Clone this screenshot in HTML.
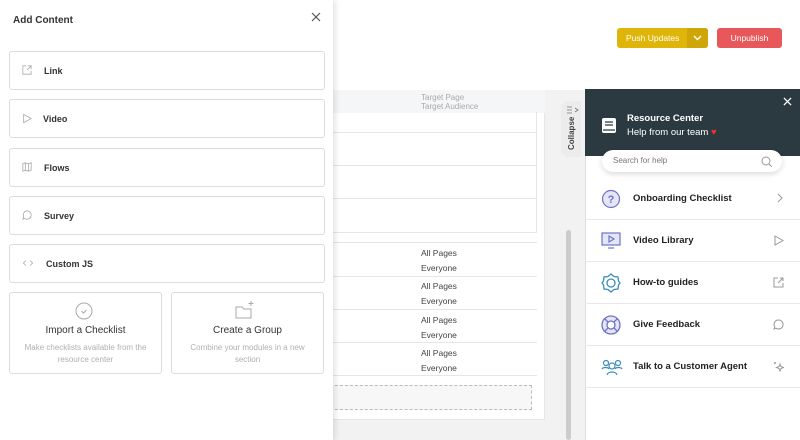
<!DOCTYPE html>
<html><head><style>
*{box-sizing:border-box;margin:0;padding:0}
body{width:800px;height:440px;overflow:hidden;position:relative;background:#fff;font-family:"Liberation Sans",sans-serif;color:#333}
.abs{position:absolute}
.card{position:absolute;left:9px;width:316px;height:39px;border:1px solid #dcdcdc;border-radius:3px;background:#fff;font-size:9px;font-weight:bold;color:#333}
.card span{position:absolute;top:14px}
.card svg{position:absolute;left:12px;top:13px}
.big{position:absolute;top:292px;width:153px;height:82px;border:1px solid #dcdcdc;border-radius:3px;text-align:center}
.big b{display:block;font-weight:normal;font-size:10px;color:#333;margin-top:32px}
.big p{font-size:8px;color:#b0b0b0;line-height:12px;margin-top:6px}
.tx{position:absolute;left:421px;font-size:8.5px;color:#444}
.row{position:absolute;left:333px;width:204px;border-bottom:1px solid #e6e6e6}
.rc{position:absolute;left:585px;width:215px;height:42px;border-bottom:1px solid #e8e8e8;font-size:9.5px;font-weight:bold;color:#222}
.rc span{position:absolute;left:48px;top:15px}
.rc svg.i{position:absolute;left:16px;top:11px}
.rc svg.r{position:absolute;right:16px;top:15px}
</style></head><body>
<div class="abs" style="left:333px;top:90px;width:252px;height:350px;background:#f2f2f2"></div>
<div class="abs" style="left:333px;top:90px;width:212px;height:330px;background:#fff;border-right:1px solid #e6e6e6;border-bottom:1px solid #e6e6e6"></div>
<div class="abs" style="left:333px;top:90px;width:212px;height:23px;background:#f5f6f8"></div>
<div class="abs" style="left:421px;top:93px;font-size:8px;color:#aaa;line-height:9px">Target Page<br>Target Audience</div>
<div class="abs" style="left:333px;top:112px;width:204px;height:121px;border:1px solid #e6e6e6;border-left:none;border-top:none"></div>
<div class="row" style="top:112px;height:21px"></div>
<div class="row" style="top:133px;height:33px"></div>
<div class="row" style="top:166px;height:33px"></div>
<div class="abs" style="left:333px;top:242px;width:204px;border-top:1px solid #e6e6e6"></div>
<div class="row" style="top:243px;height:34px"></div>
<div class="row" style="top:277px;height:33px"></div>
<div class="row" style="top:310px;height:33px"></div>
<div class="row" style="top:343px;height:33px"></div>
<div class="tx" style="top:248px">All Pages</div><div class="tx" style="top:263px">Everyone</div>
<div class="tx" style="top:281px">All Pages</div><div class="tx" style="top:296px">Everyone</div>
<div class="tx" style="top:315px">All Pages</div><div class="tx" style="top:330px">Everyone</div>
<div class="tx" style="top:348px">All Pages</div><div class="tx" style="top:363px">Everyone</div>
<div class="abs" style="left:320px;top:385px;width:212px;height:25px;border:1px dashed #bbb;background:#f7f7f7"></div>
<div class="abs" style="left:566px;top:230px;width:5px;height:210px;background:#ccc;border-radius:3px"></div>
<div class="abs" style="left:561px;top:101px;width:20px;height:56px;background:#ececec;border-radius:8px 0 0 8px"></div>
<div class="abs" style="left:567px;top:150px;font-size:8px;font-weight:bold;color:#444;transform:rotate(-90deg);transform-origin:0 0;width:40px;white-space:nowrap">Collapse</div>
<svg class="abs" style="left:566px;top:106px" width="13" height="8" viewBox="0 0 13 8" fill="none" stroke="#777" stroke-width="0.8"><path d="M1 1h5M1 4h5M1 7h5M9 2l3 2-3 2"/></svg>
<div class="abs" style="left:617px;top:28px;width:91px;height:20px;background:#e0b50a;border-radius:3px;color:#fff;font-size:8.5px;line-height:20px;padding-left:9px">Push Updates</div>
<div class="abs" style="left:687px;top:28px;width:21px;height:20px;background:#cfa608;border-radius:0 3px 3px 0"></div>
<svg class="abs" style="left:693px;top:35px" width="9" height="6" viewBox="0 0 9 6" fill="none" stroke="#fff" stroke-width="1.4"><path d="M1 1l3.5 3.5L8 1"/></svg>
<div class="abs" style="left:717px;top:28px;width:65px;height:20px;background:#e8585a;border-radius:3px;color:#fff;font-size:8.5px;line-height:20px;text-align:center">Unpublish</div>
<div class="abs" style="left:0;top:0;width:333px;height:440px;background:#fff;box-shadow:2px 0 6px rgba(0,0,0,.12)"></div>
<div class="abs" style="left:13px;top:15px;font-size:10px;font-weight:bold;color:#333">Add Content</div>
<svg class="abs" style="left:311px;top:12px" width="10" height="10" viewBox="0 0 10 10" stroke="#555" stroke-width="1.2"><path d="M1 1l8 8M9 1L1 9"/></svg>
<div class="card" style="top:51px"><svg width="10" height="10" viewBox="0 0 12 12" fill="none" stroke="#aaa" stroke-width="1"><path d="M5 1H1v10h10V7M7 1h4v4M11 1L6 6"/></svg><span style="left:34px">Link</span></div>
<div class="card" style="top:99px"><svg width="10" height="11" viewBox="0 0 12 12" fill="none" stroke="#aaa"><path d="M2 1l9 5-9 5z"/></svg><span style="left:33px">Video</span></div>
<div class="card" style="top:148px"><svg width="10" height="10" viewBox="0 0 12 12" fill="none" stroke="#aaa"><path d="M1 2l3-1 4 1 3-1v9l-3 1-4-1-3 1zM4 1v9M8 2v9"/></svg><span style="left:34px">Flows</span></div>
<div class="card" style="top:196px"><svg width="10" height="10" viewBox="0 0 12 12" fill="none" stroke="#aaa"><path d="M6 1a5 5 0 1 1-3 9l-2 1 1-3A5 5 0 0 1 6 1z"/></svg><span style="left:34px">Survey</span></div>
<div class="card" style="top:244px"><svg width="12" height="10" viewBox="0 0 13 12" fill="none" stroke="#aaa"><path d="M4 3L1 6l3 3M9 3l3 3-3 3"/></svg><span style="left:36px">Custom JS</span></div>
<div class="big" style="left:9px"><svg style="position:absolute;left:65px;top:9px" width="18" height="18" viewBox="0 0 18 18" fill="none" stroke="#aaa"><circle cx="9" cy="9" r="8"/><path d="M6.5 9l2 2 3-3"/></svg><b>Import a Checklist</b><p>Make checklists available from the<br>resource center</p></div>
<div class="big" style="left:171px"><svg style="position:absolute;left:63px;top:7px" width="20" height="20" viewBox="0 0 20 20" fill="none" stroke="#aaa"><path d="M1 7h6l2 2h7v9H1z"/><path d="M16 1v5M13.5 3.5h5"/></svg><b>Create a Group</b><p>Combine your modules in a new<br>section</p></div>
<div class="abs" style="left:585px;top:89px;width:215px;height:351px;background:#fff;border-left:1px solid #ddd"></div>
<div class="abs" style="left:585px;top:89px;width:215px;height:67px;background:#2b3a40"></div>
<svg class="abs" style="left:783px;top:97px" width="9" height="9" viewBox="0 0 10 10" stroke="#fff" stroke-width="1.4"><path d="M1 1l8 8M9 1L1 9"/></svg>
<svg class="abs" style="left:602px;top:118px" width="14" height="15" viewBox="0 0 14 15"><rect x="0" y="0" width="14" height="15" rx="2" fill="#fff"/><path d="M3 4h8M3 7h8M1 12h12" stroke="#2b3a40" stroke-width="1.2"/></svg>
<div class="abs" style="left:627px;top:113px;font-size:9.5px;font-weight:bold;color:#fff">Resource Center</div>
<div class="abs" style="left:627px;top:127px;font-size:9.5px;color:#fff">Help from our team <span style="color:#e33">♥</span></div>
<div class="abs" style="left:602px;top:150px;width:180px;height:22px;background:#fff;border-radius:11px;box-shadow:0 2px 6px rgba(0,0,0,.15);font-size:8px;color:#777;line-height:22px;padding-left:11px">Search for help</div>
<svg class="abs" style="left:761px;top:156px" width="11" height="11" viewBox="0 0 11 11" fill="none" stroke="#999"><circle cx="5" cy="5" r="4"/><path d="M8 8l3 3"/></svg>
<div class="rc" style="top:178px"><svg class="i" width="20" height="20" viewBox="0 0 20 20" fill="#e4e6f5" stroke="#6f72c8" stroke-width="1.2"><circle cx="10" cy="10" r="8.5"/><text x="10" y="14" font-size="11" text-anchor="middle" fill="#6f72c8" stroke="none" font-family="Liberation Sans">?</text></svg><span>Onboarding Checklist</span><svg class="r" width="8" height="10" viewBox="0 0 8 10" fill="none" stroke="#999"><path d="M2 1l4 4-4 4"/></svg></div>
<div class="rc" style="top:220px"><svg class="i" width="20" height="20" viewBox="0 0 20 20" fill="none" stroke="#6f72c8" stroke-width="1.2"><rect x="1" y="2" width="18" height="12" fill="#e4e6f5"/><path d="M8 5v6l5-3z"/><path d="M7 17h6"/></svg><span>Video Library</span><svg class="r" width="10" height="11" viewBox="0 0 10 11" fill="none" stroke="#999"><path d="M1 1l8 4.5L1 10z"/></svg></div>
<div class="rc" style="top:262px"><svg class="i" width="20" height="20" viewBox="0 0 20 20" fill="none" stroke="#3a8db8" stroke-width="1.3"><path d="M10 1l3 2.5 4 .5.5 4L19 10l-1.5 2-.5 4-4 .5L10 19l-3-2.5-4-.5-.5-4L1 10l1.5-2 .5-4 4-.5z"/><circle cx="10" cy="10" r="4"/></svg><span>How-to guides</span><svg class="r" width="11" height="11" viewBox="0 0 11 11" fill="none" stroke="#999"><path d="M5 1H1v9h9V6M7 1h3v3M10 1L5 6"/></svg></div>
<div class="rc" style="top:304px"><svg class="i" width="20" height="20" viewBox="0 0 20 20" fill="#e4e6f5" stroke="#6f72c8" stroke-width="1.3"><circle cx="10" cy="10" r="9"/><circle cx="10" cy="10" r="4" fill="#fff"/><path d="M4 4l3 3M16 4l-3 3M4 16l3-3M16 16l-3-3"/></svg><span>Give Feedback</span><svg class="r" width="11" height="11" viewBox="0 0 11 11" fill="none" stroke="#999"><path d="M5.5 1a4.5 4.5 0 1 1-2.5 8.2L1 10l.8-2A4.5 4.5 0 0 1 5.5 1z"/></svg></div>
<div class="rc" style="top:346px"><svg class="i" width="22" height="20" viewBox="0 0 22 20" fill="none" stroke="#3a8db8" stroke-width="1.2"><circle cx="5" cy="6" r="2.5"/><circle cx="17" cy="6" r="2.5"/><circle cx="11" cy="9" r="3"/><path d="M1 12c1-2 6-2 7 0M14 12c1-2 6-2 7 0M6 18c1-4 9-4 10 0"/></svg><span>Talk to a Customer Agent</span><svg class="r" width="11" height="11" viewBox="0 0 11 11" fill="none" stroke="#999"><path d="M7 3l1 2.5 2.5 1-2.5 1L7 10 6 7.5 3.5 6.5 6 5.5z"/><path d="M2 1v2M1 2h2"/></svg></div>
</body></html>
